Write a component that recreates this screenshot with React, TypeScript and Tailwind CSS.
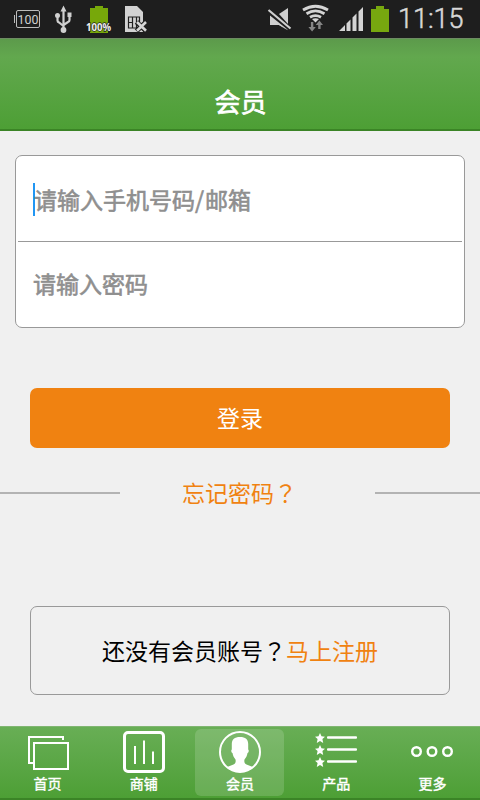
import type { ReactNode } from "react";

const ICON = "block shrink-0";

function BatteryLevelIcon() {
  return (
    <svg className={`${ICON} ml-[13px]`} width="28" height="38" viewBox="13 0 28 38" fill="none">
      <rect x="16.5" y="10.5" width="23" height="17" rx="1.5" stroke="#bcbcbc" />
      <path d="M14.5 15v8" stroke="#bcbcbc" />
      <text x="28" y="24" textAnchor="middle" fontSize="13" fontFamily="Roboto, sans-serif" textLength="21" lengthAdjust="spacingAndGlyphs" fill="#cfcfcf">100</text>
    </svg>
  );
}

function UsbIcon() {
  return (
    <svg className={`${ICON} ml-[13px]`} width="20" height="38" viewBox="54 0 20 38" fill="none">
      <path d="M63.5 9v21M57.5 17v3.5q0 1.500 1.500 2l4.500 3.500M69.500 15v5q0 1.500-1.500 2l-4.500 3" stroke="#d0d0d0" strokeWidth="2.2" />
      <path d="M63.500 5.500l3 6h-6zM67.500 12.500h4v4.500h-4z" fill="#d0d0d0" />
      <circle cx="57.500" cy="15.500" r="2.500" fill="#d0d0d0" />
      <circle cx="63.500" cy="30" r="2.900" fill="#d0d0d0" />
    </svg>
  );
}

function ChargedIcon() {
  return (
    <svg className={`${ICON} ml-[10px]`} width="30" height="38" viewBox="84 0 30 38">
      <path d="M95 6h8v2h5v25H90V8h5z" fill="#77a80a" />
      <text x="98.500" y="31" textAnchor="middle" fontSize="10.500" fontWeight="700" fontFamily="Open Sans, sans-serif" textLength="25" lengthAdjust="spacingAndGlyphs" fill="#f0f0f0" stroke="#1e1e1e" strokeWidth="1.400" paintOrder="stroke">100%</text>
    </svg>
  );
}

function SimIcon() {
  return (
    <svg className={`${ICON} ml-[10px]`} width="24" height="38" viewBox="124 0 24 38" fill="none">
      <path d="M125 6h12l6 6v20h-18z" fill="#d2d2d2" />
      <path d="M128.500 17h11v11h-11zM132.500 17v11M136.500 17v11M128.500 22.500h4M136.500 22.500h3" stroke="#202020" strokeWidth="1.200" />
      <path d="M136.500 22l9.500 9M146 22l-9.500 9" stroke="#202020" strokeWidth="5" />
      <path d="M137 22l9 8.700M146 22l-9 8.700" stroke="#d6d6d6" strokeWidth="2.600" />
    </svg>
  );
}

function MutedIcon() {
  return (
    <svg className={`${ICON} ml-auto`} width="26" height="38" viewBox="267 0 26 38" fill="none">
      <path d="M279 14l9-6v16z" fill="#cfcfcf" />
      <path d="M270 15v10h9l9 5.500v-1z" fill="#cfcfcf" />
      <path d="M268 11.500l23 19" stroke="#1e1e1e" strokeWidth="5" />
      <path d="M268.500 10l22 18.500" stroke="#cfcfcf" strokeWidth="2.200" />
      <path d="M270 15.500v9.500h9l8.500 5v-.5z" fill="#cfcfcf" />
    </svg>
  );
}

function WifiIcon() {
  return (
    <svg className={`${ICON} ml-[7px]`} width="30" height="38" viewBox="300 0 30 38" fill="none">
      <path d="M303 10q12.500-7.500 25 0M306.500 13.700q9-5.500 18 0M310 17.200q5.500-3.300 11 0" stroke="#d4d4d4" strokeWidth="2.800" />
      <path d="M312 19q3.500-1.500 7 0l-3.500 3.500z" fill="#d4d4d4" />
      <path d="M310.900 22h2.400v5h2.500l-3.700 4.500-3.700-4.500h2.500zM318.200 29v-4h-2.500l3.700-4.500 3.600 4.500h-2.400v4z" fill="#858585" />
    </svg>
  );
}

function SignalIcon() {
  return (
    <svg className={`${ICON} ml-[8px]`} width="26" height="38" viewBox="338 0 26 38">
      <path d="M339 31l6-6v6zM346.500 23.500l4-4V31h-4zM352.500 17.500l4-4V31h-4zM358.500 11.500l4.500-4.500v24h-4.500z" fill="#d4d4d4" />
    </svg>
  );
}

function StatusBar() {
  return (
    <div className="flex h-[38px] items-center bg-[#1e1e1e]">
      <BatteryLevelIcon />
      <UsbIcon />
      <ChargedIcon />
      <SimIcon />
      <MutedIcon />
      <WifiIcon />
      <SignalIcon />
      <svg className={`${ICON} ml-[7px]`} width="18" height="38" viewBox="371 0 18 38">
        <path d="M376 6h8v3h5v23h-18V9h5z" fill="#77a80f" />
      </svg>
      <span className="ml-[9px] w-[82px] font-['Roboto',sans-serif] text-[27px] leading-[38px] font-light text-[#d8d8d8] [-webkit-text-stroke:0.5px_#d8d8d8]">11:15</span>
    </div>
  );
}

function HomeIcon() {
  return (
    <svg className={`${ICON} ml-[3px]`} width="42" height="42" viewBox="0 0 42 42" fill="none" stroke="#fff" strokeWidth="2">
      <path d="M35 9V6H1v26h4" />
      <rect x="6" y="12" width="34" height="26" />
    </svg>
  );
}

function ShopIcon() {
  return (
    <svg className={ICON} width="42" height="42" viewBox="0 0 42 42" fill="none" stroke="#fff">
      <rect x="1.500" y="1.500" width="39" height="39" rx="3.500" strokeWidth="3" />
      <path d="M12 15v18M21 9.500V33M30 20.500V33" strokeWidth="2" />
    </svg>
  );
}

function MemberIcon() {
  return (
    <svg className={ICON} width="42" height="42" viewBox="0 0 42 42">
      <circle cx="21" cy="21" r="20" fill="none" stroke="#fff" strokeWidth="2" />
      <path d="M21 6c5.500 0 8.200 2.500 8.200 7v5.500c1 .5.500 3-.7 3.500-.5 3-1.500 4.500-3 6.500-.5 2.500 0 4 2 5l7 2.700Q29 41 21 41T7.500 36.200l7-2.700c2-1 2.500-2.500 2-5-1.500-2-2.500-3.500-3-6.500-1.200-.5-1.700-3-.7-3.500V13c0-4.500 2.700-7 8.200-7z" fill="#fff" />
    </svg>
  );
}

function ProductIcon() {
  return (
    <svg className={ICON} width="42" height="42" viewBox="0 0 42 42">
      {[7, 19, 31].map((y) => (
        <g key={y} transform={`translate(5 ${y})`} fill="#fff">
          <path d="M0-5l1.500 3.300 3.500.4-2.600 2.400.8 3.900L0 3.100-3.200 5l.8-3.900L-5-1.300l3.500-.4z" />
          <rect x="7" y="-1.800" width="30" height="2.600" rx="1" />
        </g>
      ))}
    </svg>
  );
}

function MoreIcon() {
  return (
    <svg className={`${ICON} mr-[2px]`} width="42" height="42" viewBox="0 0 42 42" fill="none" stroke="#fff" strokeWidth="2.400">
      <circle cx="5.500" cy="20.500" r="4.300" />
      <circle cx="21" cy="20.500" r="4.300" />
      <circle cx="36.500" cy="20.500" r="4.300" />
    </svg>
  );
}

function Tab({ label, children, active = false }: { label: string; children: ReactNode; active?: boolean }) {
  return (
    <div className={`flex h-[67px] w-[89px] flex-col items-center rounded-md pt-[2px] pl-[2px] ${active ? "bg-white/15" : ""}`}>
      {children}
      <span className="text-[14px] leading-[20px] text-white [-webkit-text-stroke:0.4px_white]">{label}</span>
    </div>
  );
}

export default function App() {
  return (
    <div className="flex h-[800px] w-[480px] flex-col overflow-hidden bg-[#f0f0f0] font-['Noto_Sans_CJK_SC',sans-serif]">
      <StatusBar />
      <header className="flex h-[93px] items-end justify-center border-t border-b-2 border-t-[#6d8b62] border-b-[#3b8426] bg-linear-[180deg,#5c9a4b_0%,#62a84e_20%,#4d9f35_100%] pb-[9px] pl-px">
        <h1 className="text-[26px] leading-[38px] text-white [-webkit-text-stroke:0.7px_white]">会员</h1>
      </header>

      <main className="flex flex-1 flex-col">
        <section className="mx-[15px] mt-6 h-[173px] rounded-[7px] border border-[#999] bg-white px-[2px] text-[23px] text-[#8f8f8f] [-webkit-text-stroke:0.6px_#8f8f8f]">
          <div className="flex h-[86px] items-center border-b border-[#999] pt-px">
            <i className="ml-[15px] h-[33px] w-[2px] bg-[#2196f3]" />
            <span className="-ml-px">请输入手机号码<span className="mr-px">/</span>邮箱</span>
          </div>
          <div className="flex h-[85px] items-center pb-[2px] pl-[15px]">请输入密码</div>
        </section>

        <button className="mx-[30px] mt-[60px] h-[60px] shrink-0 rounded-[7px] bg-[#f08211] pb-[2px] text-[23px] text-white">登录</button>

        <div className="mt-[26px] flex h-[38px] items-center">
          <i className="h-[2px] w-[120px] bg-[#b3b3b3]" />
          <span className="ml-[62px] pb-px text-[23px] text-[#f08211]">忘记密码<span className="font-['Noto_Sans_CJK_TC']">？</span></span>
          <i className="ml-auto h-[2px] w-[105px] bg-[#b3b3b3]" />
        </div>

        <div className="mx-[30px] mt-[94px] flex h-[89px] items-center justify-center rounded-[7px] border border-[#999] text-[23px] text-black">
          还没有会员账号<span className="font-['Noto_Sans_CJK_TC']">？</span><span className="text-[#f08211]">马上注册</span>
        </div>
      </main>

      <nav className="flex h-[74px] justify-between border-t border-b-2 border-t-[#80b671] border-b-[#3b8426] bg-linear-to-b from-[#68ae55] to-[#4d9f35] pt-[2px] pr-1 pl-[2px]">
        <Tab label="首页"><HomeIcon /></Tab>
        <Tab label="商铺"><ShopIcon /></Tab>
        <Tab label="会员" active><MemberIcon /></Tab>
        <Tab label="产品"><ProductIcon /></Tab>
        <Tab label="更多"><MoreIcon /></Tab>
      </nav>
    </div>
  );
}
